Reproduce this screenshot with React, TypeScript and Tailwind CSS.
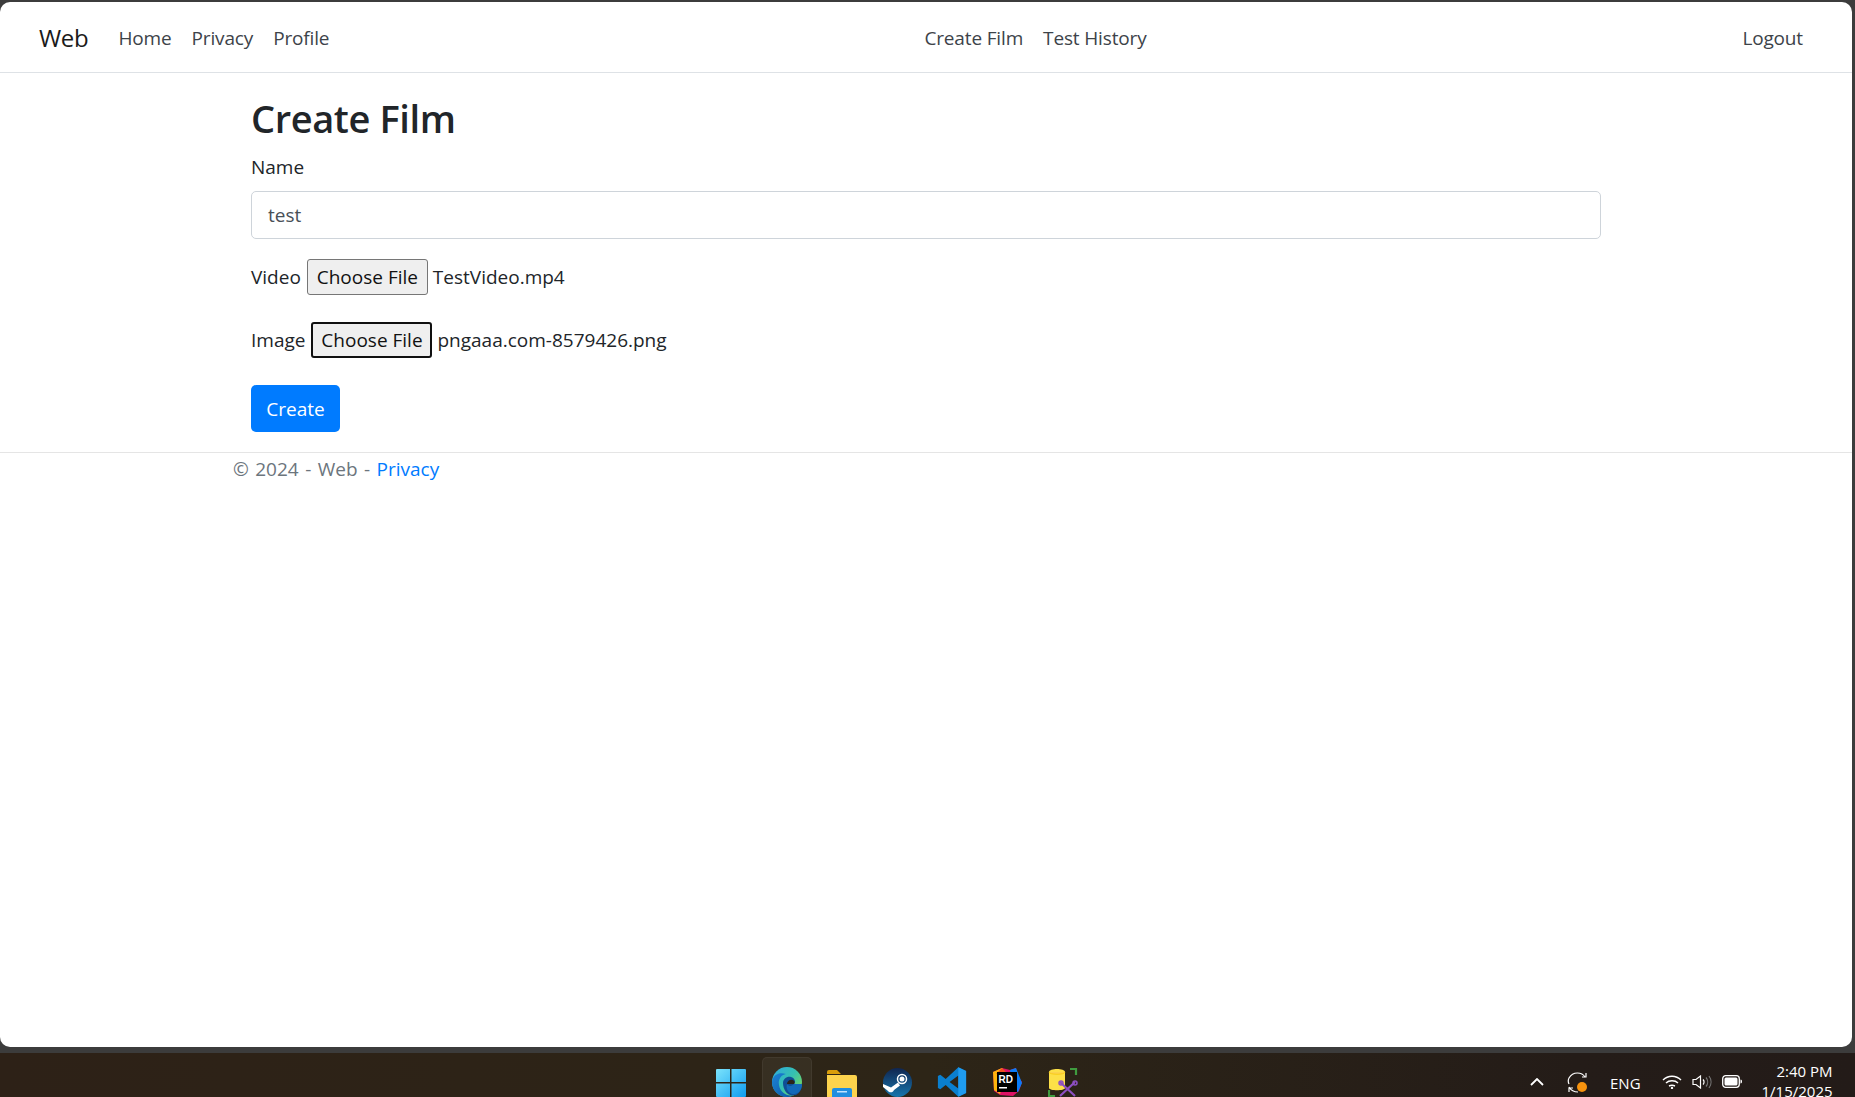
function WindowsIcon() {
  return (
    <svg width="30" height="30" viewBox="0 0 30 30">
      <defs>
        <linearGradient id="win" x1="0" y1="0" x2="1" y2="1">
          <stop offset="0" stopColor="#7be3fb" />
          <stop offset="1" stopColor="#0f9cf0" />
        </linearGradient>
      </defs>
      <path d="M1 1h13v13H0V2a1 1 0 0 1 1-1zM15.500 1H29a1 1 0 0 1 1 1v12H15.500zM0 15.500h14V29H1a1 1 0 0 1-1-1zM15.500 15.500H30V28a1 1 0 0 1-1 1H15.500z" fill="url(#win)" />
    </svg>
  );
}

function EdgeIcon() {
  return (
    <svg width="30" height="30" viewBox="0 0 30 30">
      <defs>
        <linearGradient id="edgeTop" x1="0" y1="0" x2="1" y2="0.8">
          <stop offset="0" stopColor="#2fa8e0" />
          <stop offset="0.55" stopColor="#35c1b1" />
          <stop offset="1" stopColor="#7ed957" />
        </linearGradient>
        <linearGradient id="edgeLow" x1="0" y1="0" x2="1" y2="1">
          <stop offset="0" stopColor="#1c82d6" />
          <stop offset="1" stopColor="#0c59a4" />
        </linearGradient>
      </defs>
      <circle cx="15" cy="15" r="15" fill="url(#edgeTop)" />
      <path d="M0 15C1 7 8 5 14 7c-5 1-8 5-7 11 1 7 8 12 15 10-2 1.500-5 2-7 2C6 30 0 23 0 15z" fill="url(#edgeLow)" />
      <path d="M11 16c0-4 4-7 8-6 4 1 5 5 3 7h8c0 7-5 12-8 11-6 2-11-5-11-12z" fill="#0f4f96" />
      <path d="M15 17c0-3 3-5 6-4 2 1 2 3 1 4z" fill="#2b2419" />
      <path d="M22 17h8c0 3-1 6-3 8-2 2-7 3-9 1-3-2-4-6-3-9 1 2 4 3 7 0z" fill="#1369b8" />
    </svg>
  );
}

function FolderIcon() {
  return (
    <svg width="30" height="28" viewBox="0 0 30 28">
      <path d="M0 3a2 2 0 0 1 2-2h8l4 4h-14z" fill="#d99e0b" />
      <path d="M0 6h28a2 2 0 0 1 2 2v20H0z" fill="#fcd34d" />
      <path d="M5 21a2 2 0 0 1 2-2h16a2 2 0 0 1 2 2v7H5z" fill="#1f8ee0" />
      <rect x="10" y="22" width="10" height="1.500" fill="#bfe3ff" />
    </svg>
  );
}

function SteamIcon() {
  return (
    <svg width="29" height="29" viewBox="0 0 29 29">
      <defs>
        <linearGradient id="steam" x1="0" y1="0" x2="0" y2="1">
          <stop offset="0" stopColor="#10254f" />
          <stop offset="1" stopColor="#1776ad" />
        </linearGradient>
      </defs>
      <circle cx="14.500" cy="14.500" r="14.500" fill="url(#steam)" />
      <circle cx="19" cy="11" r="4.500" fill="none" stroke="#fff" strokeWidth="1.500" />
      <circle cx="19" cy="11" r="2.500" fill="#fff" />
      <path d="M0 16l8 3.500 7-5 2 3-6 4.500c-1 3-5 3-6.500.5L0 19z" fill="#fff" />
    </svg>
  );
}

function VsCodeIcon() {
  return (
    <svg width="30" height="30" viewBox="0 0 100 100">
      <path
        fillRule="evenodd"
        d="M71 1L29 40 11 26 3 30v40l8 4 18-14 42 39 26-12V13zM71 28v44L42 50z"
        fill="#0a7fcf"
      />
      <path d="M71 1l26 12v74L71 99z" fill="#1f9cf0" />
    </svg>
  );
}

function RiderIcon() {
  return (
    <svg width="30" height="30" viewBox="0 0 30 30">
      <path d="M1 5l9-4 8 2 6-2 1 7 5 7-3 9-6 5-13-1-6-4z" fill="#dd1265" />
      <path d="M1 5l9-4 4 6-6 20-6-4z" fill="#fdb60d" />
      <path d="M18 3l6-2 6 15-4 9-5-2z" fill="#087cfa" />
      <path d="M4 7L10 1l6 6z" fill="#f04e23" />
      <rect x="5" y="5" width="20" height="20" fill="#000" />
      <text x="6.500" y="15.500" fontFamily="'Liberation Sans', sans-serif" fontWeight="700" fontSize="10" fill="#fff">
        RD
      </text>
      <rect x="7" y="20" width="8" height="1.500" fill="#fff" />
    </svg>
  );
}

function DbToolIcon() {
  return (
    <svg width="30" height="29" viewBox="0 0 30 29">
      <path d="M1 4c0-4 16-4 16 0v16c0 3-16 3-16 0z" fill="#fde047" />
      <path d="M1 4c0 3 16 3 16 0" fill="#fcd34d" stroke="#facc15" />
      <path d="M22 1h6v6M1 22v6h6" fill="none" stroke="#3f9c3f" strokeWidth="2.200" />
      <path d="M12 14l15 14M27 14L12 28" stroke="#8d4fc2" strokeWidth="2.200" />
      <circle cx="13" cy="15" r="2" fill="none" stroke="#8d4fc2" strokeWidth="1.500" />
      <circle cx="27" cy="15" r="2" fill="none" stroke="#8d4fc2" strokeWidth="1.500" />
    </svg>
  );
}

function FilePicker({ label, fileName, focused }: { label: string; fileName: string; focused?: boolean }) {
  return (
    <div className="flex h-9 items-center">
      <span>{label}</span>
      <button
        className={`ml-[6px] mr-[5px] h-9 w-[121px] rounded-[3px] bg-[#efefef] text-[#111] ${
          focused ? "border-2 border-[#101010]" : "border border-[#767676]"
        }`}
      >
        Choose File
      </button>
      <span>{fileName}</span>
    </div>
  );
}

export default function App() {
  return (
    <div className="flex h-[1097px] w-[1855px] flex-col overflow-hidden bg-[#3c3c3c] pt-[2px] font-['Open_Sans',sans-serif] text-[19px] text-[#212529]">
      <div className="mr-[3px] h-[1045px] shrink-0 rounded-[10px] bg-white">
        <nav className="flex h-[71px] items-center border-b border-[#dee2e6] pl-[39px] pr-[49px] pt-[2px] tracking-[-0.15px] text-[#3d4349]">
          <a className="mr-[30px] text-[24px] tracking-[-0.3px] text-[#1a1a1a]">Web</a>
          <div className="flex w-[806px] gap-[20px]">
            <a>Home</a>
            <a>Privacy</a>
            <a>Profile</a>
          </div>
          <div className="flex gap-[20px]">
            <a>Create Film</a>
            <a>Test History</a>
          </div>
          <a className="ml-auto">Logout</a>
        </nav>

        <main className="ml-[251px] w-[1350px]">
          <h1 className="mt-[21px] text-[38px] font-semibold leading-[48px] tracking-[-0.4px]">Create Film</h1>
          <label className="mt-[11px] block leading-7">Name</label>
          <div className="mt-[10px] flex h-12 items-center rounded-[5px] border border-[#ced4da] px-4 text-[#495057]">
            test
          </div>
          <div className="mt-5 flex flex-col gap-[27px]">
            <FilePicker label="Video" fileName="TestVideo.mp4" />
            <FilePicker label="Image" fileName="pngaaa.com-8579426.png" focused />
          </div>
          <button className="mt-[27px] h-[47px] w-[89px] rounded-[5px] bg-[#007bff] pt-[2px] text-white">Create</button>
        </main>

        <footer className="mt-5 border-t border-[#e5e5e5] pl-[233px] pt-[2px] leading-7 text-[#6c757d] [word-spacing:1.5px]">
          © 2024 - Web - <a className="text-[#007bff]">Privacy</a>
        </footer>
      </div>

      <div className="mt-[6px] flex h-11 shrink-0 items-start overflow-hidden bg-[linear-gradient(90deg,#2d2117,#2d2517_50%,#241c18_85%,#231b18)] text-white">
        <div className="ml-[716px] flex items-start">
          <div className="mt-[15px]">
            <WindowsIcon />
          </div>
          <div className="ml-4 mt-1 flex h-[50px] w-[50px] justify-center rounded-[5px] border border-white/5 bg-white/5 pt-[9px]">
            <EdgeIcon />
          </div>
          <div className="ml-[15px] mt-4">
            <FolderIcon />
          </div>
          <div className="ml-[26px] mt-[15px]">
            <SteamIcon />
          </div>
          <div className="ml-[25px] mt-[14px]">
            <VsCodeIcon />
          </div>
          <div className="ml-[25px] mt-[14px]">
            <RiderIcon />
          </div>
          <div className="ml-[26px] mt-[15px]">
            <DbToolIcon />
          </div>
        </div>

        <div className="ml-[452px] flex items-start">
          <svg className="mt-[25px]" width="14" height="8" viewBox="0 0 14 8">
            <path d="M1 7l6-6 6 6" fill="none" stroke="#fff" strokeWidth="1.800" />
          </svg>
          <svg className="ml-[23px] mt-[19px]" width="21" height="21" viewBox="0 0 21 21">
            <path d="M18 5C15 0 6-1 2 6c-1 2-1 4 0 6" fill="none" stroke="#fff" strokeWidth="1.200" />
            <path d="M15 5h4V1M2 15c3 5 7 5 9 5M6 16H2v4" fill="none" stroke="#fff" strokeWidth="1.200" />
            <circle cx="15" cy="15" r="5" fill="#f7930e" />
          </svg>
          <span className="ml-[22px] mt-[20px] text-[15px] leading-5">ENG</span>
          <svg className="ml-[21px] mt-[22px]" width="20" height="14" viewBox="0 0 20 14">
            <path d="M1 5c5-5 13-5 18 0M4 8c3-3 9-3 12 0M7 11c2-1 4-1 6 0" fill="none" stroke="#fff" strokeWidth="1.400" />
            <circle cx="10" cy="13" r="1.200" fill="#fff" />
          </svg>
          <svg className="ml-[10px] mt-[22px]" width="20" height="14" viewBox="0 0 20 14">
            <path d="M1 4.500h3L8.500 1v12L4 9.500H1z" fill="none" stroke="#fff" strokeWidth="1.200" />
            <path d="M11 4.500a3.500 3.500 0 0 1 0 5" fill="none" stroke="#fff" strokeWidth="1.200" />
            <path d="M14 2.500a7 7 0 0 1 0 9M17 1a10 10 0 0 1 0 12" fill="none" stroke="#777" strokeWidth="1.200" />
          </svg>
          <svg className="ml-[10px] mt-[22px]" width="20" height="13" viewBox="0 0 20 13">
            <rect x="0.700" y="0.700" width="16.600" height="11.600" rx="3" fill="none" stroke="#fff" strokeWidth="1.300" />
            <rect x="2.500" y="2.500" width="13" height="8" rx="1.500" fill="#fff" />
            <path d="M18.500 4.500c1 0 1.500.8 1.500 2s-.5 2-1.500 2z" fill="#fff" />
          </svg>
          <div className="ml-[21px] mt-2 w-[70px] whitespace-nowrap text-right text-[15px] leading-[20px]">
            <div>2:40 PM</div>
            <div className="flex justify-end">1/15/2025</div>
          </div>
        </div>
      </div>
    </div>
  );
}
